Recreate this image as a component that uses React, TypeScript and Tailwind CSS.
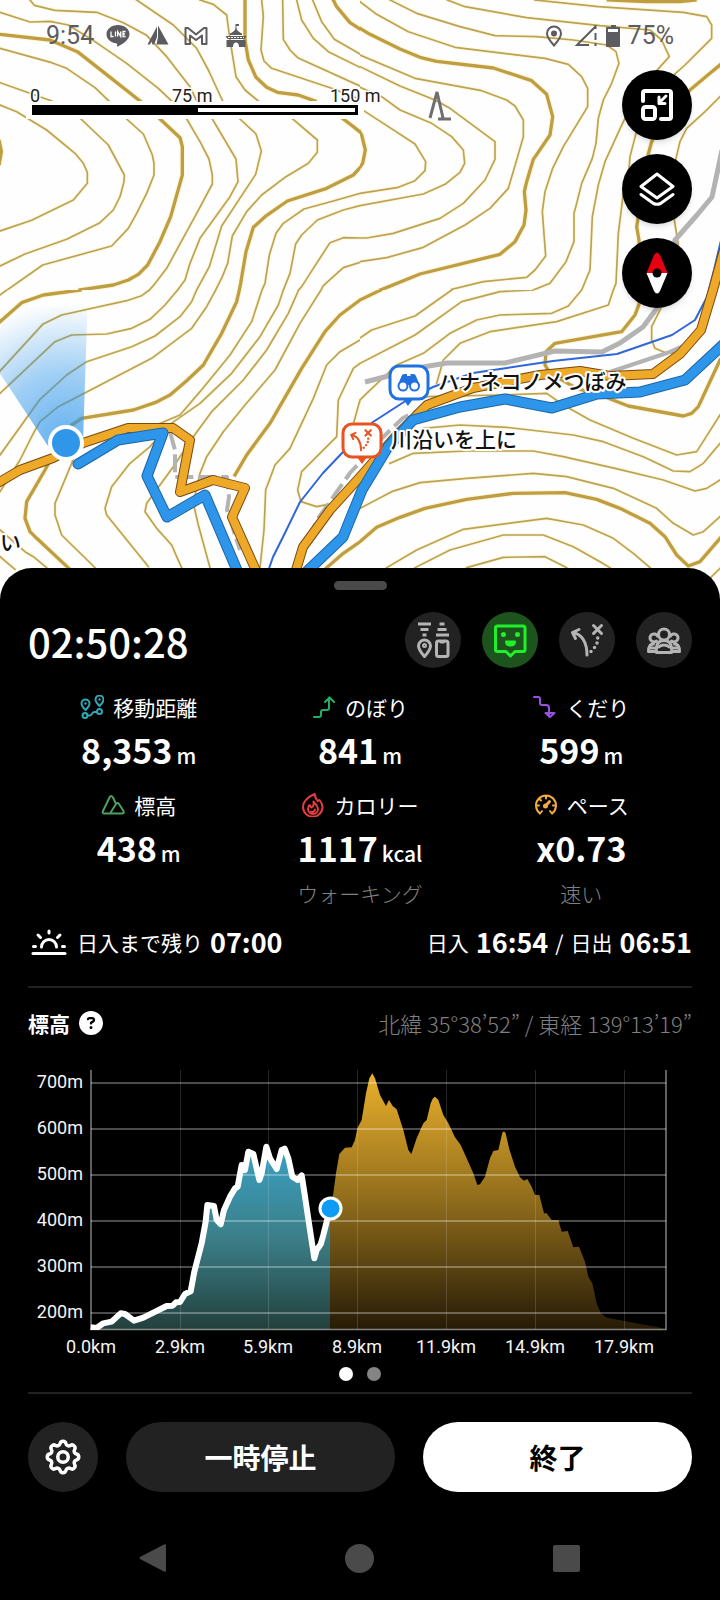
import type { ReactNode } from "react";
import { FaCircleQuestion } from "react-icons/fa6";
import { TbSettings } from "react-icons/tb";

type Tile = { x: number; y: number; width: number; height: number; viewBox: string; minor: string[]; major: string[] };

// contour tiles, drawn at 3 units per map pixel
const tiles: Tile[] = [
  {
    x: 0, y: 0, width: 360, height: 290, viewBox: "0 0 1080 870",
    minor: [
      "0,37 90,66 150,64 205,75 285,125 380,190 475,265 515,303",
      "90,0 103,16 165,31 290,37 370,68 440,106 500,170 570,260 590,303",
      "410,0 520,75 590,145 625,210 668,303",
      "600,0 640,13 680,45 690,120 708,230 735,270 775,303",
      "785,0 790,50 783,150 792,183 815,205 995,265 1080,298",
      "848,0 850,118 870,150 893,173 1080,258",
      "890,0 905,60 940,115 985,155 1080,202",
      "938,0 965,65 1003,118 1080,162",
      "0,145 155,188 200,205 285,263 327,303",
      "0,248 90,280 155,303",
      "0,315 50,335 140,390 225,460 250,490 262,517 262,550 220,600 95,661 0,693",
      "243,357 325,435 373,525 372,545 360,590 340,630 300,668 200,718 75,762 0,798",
      "380,357 430,402 457,465 462,490 462,525 440,580 410,640 385,685 335,738 128,795 0,885",
      "560,357 600,425 627,477 637,525 637,552 590,640 500,805 460,857 448,870",
      "637,357 708,477 714,545 690,590 600,715 570,790 555,840 533,870",
      "720,357 768,402 784,453 767,523 665,678 628,800 590,870",
      "878,357 952,420 952,457 925,490 858,530 785,585 740,635 697,708 683,790 667,830 647,870",
      "1080,580 1000,603 912,627 850,670 828,700 808,765 795,850 786,870",
      "1080,617 1030,630 952,660 905,705 887,732 870,820 850,870",
      "1080,714 1030,713 990,728 940,805 905,860 896,870",
      "1080,787 1030,803 970,857 963,870",
    ],
    major: [
      "735,0 735,120 745,180 768,232 800,262 832,277 895,285 945,303",
      "1000,0 1010,20 1050,68 1080,87",
      "0,103 150,120 232,155 300,208 420,303",
      "480,357 540,413 547,440 547,525 512,650 480,725 443,795 415,823 385,840 340,855 240,870",
      "1030,357 1060,380 1085,400",
      "1085,498 1060,525 980,565 862,603 795,650 760,682 738,755 722,850 718,870",
      "-2,425 4,455 -2,490",
    ],
  },
  {
    x: 360, y: 0, width: 360, height: 290, viewBox: "0 0 1080 870",
    minor: [
      "0,5 50,43 145,95 285,142 555,175 625,193 665,230 683,265 683,320 610,440 578,505 555,575 547,635 557,768 525,810 500,832 370,845 275,868",
      "90,0 170,40 300,80 405,107 530,110 640,120 740,135 768,155 777,190 755,250 730,300 715,355 708,430 697,475 665,550 650,610 642,640 642,725 618,785 570,850 520,870",
      "262,0 315,20 500,53 720,77 870,90 905,120 928,170 860,245 790,365 760,430 735,485 715,555 697,650 690,810 665,870",
      "525,0 715,20 970,37 1040,50 1055,75 1055,115 975,195 930,235 880,330 828,400 810,470 805,530 790,580 775,700 768,850 760,870",
      "1080,290 1035,335 980,385 960,425 948,475 935,560 943,660 955,735 950,800 915,870",
      "0,165 165,235 365,272 440,300 465,318 490,360 490,410 470,480 445,565 390,625 315,675 190,742 80,773 0,785",
      "0,200 120,258 225,300 270,325 405,425 405,478 375,540 310,610 240,655 100,700 20,714 0,714",
      "0,262 65,290 120,330 215,370 275,410 310,450 314,490 300,517 255,553 190,582 0,617",
      "5,328 70,370 165,432 197,485 195,512 165,542 115,562 0,580",
    ],
    major: [
      "745,0 860,5 960,5 1005,0",
      "1080,195 1040,228 990,270 920,340 875,425 860,480 850,560 830,680 837,720 840,870",
      "0,85 30,103 120,147 180,172 230,184 400,204 515,242 560,283 578,350 570,405 520,478 500,545 493,575 498,630 492,675 465,725 420,763 180,822 62,870",
      "-5,388 5,405 16,450 8,490 -5,508",
    ],
  },
  {
    x: 0, y: 290, width: 360, height: 320, viewBox: "0 0 1080 960",
    minor: [
      "0,15 20,0",
      "448,0 425,17 380,32 185,75 128,103 0,243",
      "533,0 495,45 450,88 395,115 320,132 215,135 165,155 0,310",
      "590,0 575,35 540,80 465,138 395,170 260,215 200,255 120,328 0,495",
      "647,0 620,50 575,115 455,205 175,350 120,395 100,430 60,510 0,605",
      "786,0 755,95 690,195 600,305 540,375 480,400",
      "850,0 835,45 780,140 695,250 600,340 500,410 450,470 390,520 335,590 315,655 320,675 445,830",
      "240,450 215,520 165,640 165,675 185,735 285,833",
      "896,0 865,70 800,180 730,270 635,365 580,440 520,530 440,640 435,665 470,715 515,765 530,800 545,833",
      "963,0 900,100 825,240 735,345 670,425 620,500 600,550 580,640 595,705 630,833",
      "1080,150 1020,185 980,225 940,325 870,475 825,525 797,600 792,720 780,833",
      "1080,220 1060,235 1015,330 1010,440 905,545 893,600 903,635 950,650 1000,640 1080,560",
      "1080,330 1062,395",
      "0,720 75,785 100,800 140,833 160,860",
      "0,800 45,838",
    ],
    major: [
      "0,95 65,38 130,15 240,0",
      "718,0 710,35 665,130 610,225 560,272 510,315 465,338 400,360 245,385 215,405 170,475 135,540 80,635 75,685 90,725 110,745 215,843",
      "1080,30 1020,75 975,125 905,235 810,400 740,495 705,555",
      "980,833 1030,790 1080,755",
    ],
  },
  {
    x: 360, y: 290, width: 360, height: 320, viewBox: "180 0 1080 960",
    minor: [
      "455,0 345,78 215,120 120,185",
      "700,0 600,5 485,35 345,135 180,220",
      "845,0 805,48 755,70 600,75 530,90 450,130 370,190 290,225 200,310 180,330 165,395",
      "940,0 925,45 770,95 570,125 480,160 430,210 410,280",
      "1095,0 1085,50 1055,110 1055,150 1065,175 1100,190 1150,185",
      "380,320 600,315 740,310 790,345 870,390 1000,445 1130,495 1190,485 1225,430 1260,375",
      "370,415 480,405 620,412 820,435 910,455 1030,500 1120,543 1170,545 1210,520 1260,460",
      "270,520 340,490 500,483 700,483 790,500 945,535 1090,570 1185,603 1220,595 1260,570",
      "180,655 275,605 360,578 500,565 700,550 800,560 940,595 1070,655 1120,700 1180,735 1210,725 1260,680",
      "260,833 350,780 490,718 740,685 850,705 940,745 1000,790 1050,833",
      "345,833 450,780 610,735 730,735 820,770 900,815 930,833",
      "500,833 610,802 735,800 800,833",
      "1235,860 1260,835",
    ],
    major: [
      "180,30 242,0",
      "180,755 230,712 300,682 375,655 500,628 640,610 795,608 890,628 960,655 1050,700 1095,740 1130,795 1165,828 1200,815 1260,745",
      "1020,0 1018,40 1005,75 965,125 765,160 738,185 735,225 750,250 830,295 900,315 985,348 1150,378 1175,370 1195,350 1260,210",
    ],
  },
];

const plannedRoutes = [
  "-4,484 20,470 53,458 83,443 128,428 173,428 190,440 180,492 213,480 245,488 232,517 262,584",
  "293,580 303,547 330,510 360,477 395,437 427,405 473,388 540,375 580,371 610,376 653,374 680,354 701,330 713,290 724,250",
];
const walkedRoutes = [
  "78,464 118,440 163,433 147,476 167,517 205,495 242,582",
  "298,580 343,537 362,490 388,447 413,420 460,407 505,399 552,408 597,394 640,392 685,380 726,342",
];

function SignPost({ color }: { color: string }) {
  return (
    <g fill="none" stroke={color} strokeWidth="3" strokeLinecap="round" strokeLinejoin="round">
      <path d="M20 17.500 13.500 20.500 16.500 26.500M14.500 21c8 1 13.500 9 13.500 22" />
      <path d="m34.500 13.500 8 8m0-8-8 8" />
      <path d="M38.700 26v0M38 31v0M35.500 35.500v0M32 39.500v0" strokeWidth="3.500" />
    </g>
  );
}

function ContourMap() {
  return (
    <svg viewBox="0 0 720 600" preserveAspectRatio="xMidYMin slice" className="h-full w-full" role="img" aria-label="地図">
      <defs>
        <radialGradient id="beam" gradientUnits="userSpaceOnUse" cx="66" cy="443" r="140">
          <stop offset="0" stopColor="#2f96ea" stopOpacity="0.75" />
          <stop offset="0.5" stopColor="#2f96ea" stopOpacity="0.45" />
          <stop offset="1" stopColor="#2f96ea" stopOpacity="0" />
        </radialGradient>
      </defs>
      <rect width="720" height="600" fill="#fefefe" />
      {tiles.map((t) => (
        <svg key={`${t.x}-${t.y}`} x={t.x} y={t.y} width={t.width} height={t.height} viewBox={t.viewBox} fill="none" stroke="#fdf7dc" strokeWidth="11" strokeLinejoin="round" strokeLinecap="square">
          {t.minor.map((p) => <polyline key={p} points={p} />)}
          {t.major.map((p) => <polyline key={p} points={p} strokeWidth="17" />)}
        </svg>
      ))}
      {tiles.map((t) => (
        <svg key={`${t.x}-${t.y}`} x={t.x} y={t.y} width={t.width} height={t.height} viewBox={t.viewBox} fill="none" strokeLinejoin="round" strokeLinecap="square">
          <g stroke="#bba254" strokeWidth="5">
            {t.minor.map((p) => <polyline key={p} points={p} />)}
          </g>
          <g stroke="#bf9d42" strokeWidth="10">
            {t.major.map((p) => <polyline key={p} points={p} />)}
          </g>
        </svg>
      ))}

      {/* roads, footpaths and the stream */}
      <g fill="none" strokeLinejoin="round">
        <g stroke="#b3b3b3" strokeWidth="5">
          <polyline points="365,382 423,367 447,363 505,363 555,351 602,352 620,343 643,327 663,300 670,270 675,240 697,215 712,197 722,150" />
          <polyline points="610,372 667,353 690,343" strokeWidth="4" />
          <polyline points="430,405 403,418 380,440 350,473 317,520 300,560" strokeWidth="4" strokeDasharray="18 6" />
          <polyline points="170,432 175,450 175,477 192,477 227,477 229,497 227,510 240,550" strokeWidth="4" strokeDasharray="18 5" />
        </g>
        <polyline points="265,580 273,557 283,537 300,502 323,473 343,452 373,422 407,400 433,387 473,373 507,368 553,361 617,354 672,335 695,320 707,297 714,270 722,236" stroke="#2f66d8" strokeWidth="2" />
      </g>

      <g fill="none" strokeLinejoin="round" strokeLinecap="round">
        {plannedRoutes.map((p) => <polyline key={p} points={p} stroke="#774a12" strokeWidth="10" />)}
        {plannedRoutes.map((p) => <polyline key={p} points={p} stroke="#efa928" strokeWidth="8" />)}
        {walkedRoutes.map((p) => <polyline key={p} points={p} stroke="#1d66a8" strokeWidth="11" />)}
        {walkedRoutes.map((p) => <polyline key={p} points={p} stroke="#2d96ea" strokeWidth="9" />)}
      </g>

      <path d="M48 446-30 328V290H88L83 443Z" fill="url(#beam)" />
      <circle cx="66" cy="443" r="18" fill="#fff" />
      <circle cx="66" cy="443" r="14" fill="#2f96ea" />

      <path d="m403 399 5 7 5-7Z" fill="#2070de" />
      <rect x="390" y="366" width="38" height="33" rx="9" fill="#fff" stroke="#2070de" strokeWidth="3" />
      <path d="M398 385 401.500 376q.5-2 3-2h2.500v2h3.500v-2h2.500q2.500 0 3 2L419.500 385Z" fill="#2070de" />
      <g fill="#fff" stroke="#2070de" strokeWidth="2">
        <circle cx="403" cy="386" r="4.500" />
        <circle cx="414.500" cy="386" r="4.500" />
      </g>
      <path d="m357 457 5 7 5-7Z" fill="#e8531f" />
      <rect x="343" y="424" width="38" height="33" rx="9" fill="#fff" stroke="#e8531f" strokeWidth="3" />
      <svg x="342" y="421" width="38" height="38" viewBox="0 0 56 56"><SignPost color="#e8531f" /></svg>

      <g fill="#111" stroke="#fff" strokeWidth="4" strokeLinejoin="round" className="text-[21px] font-medium [paint-order:stroke]">
        <text x="438" y="389">ハナネコノメつぼみ</text>
        <text x="391" y="447">川沿いを上に</text>
        <text x="0" y="550">い</text>
      </g>

      {/* scale bar */}
      <rect x="26" y="101" width="338" height="18" fill="#fefefe" />
      <rect x="32" y="105" width="326" height="10" fill="#000" />
      <rect x="198" y="108" width="157" height="4" fill="#fff" />
      <g fill="#222" stroke="#fff" strokeWidth="3" className="font-[Roboto] text-[18px] [paint-order:stroke]">
        <text x="30" y="102">0</text>
        <text x="172" y="102">75 m</text>
        <text x="330" y="102">150 m</text>
      </g>
      <path d="m430 118 7-26 6 26m-5 1h13" fill="none" stroke="#6f6f6f" strokeWidth="3" />
    </svg>
  );
}

function StatusBar() {
  return (
    <div className="absolute inset-x-0 top-0 flex h-[72px] items-center justify-between pr-[46px] pl-[46px] font-[Roboto] text-[25px] text-[#5c5c60]">
      <div className="flex items-center gap-3">
        <span>9:54</span>
        <svg viewBox="0 0 24 24" className="size-6" aria-hidden="true">
          <path d="M12 1C5.500 1 .5 5 .5 10.200c0 4.600 4 8.400 9.700 9.100 1.500.3.800 1.700.8 3.400 4-1.500 12.500-6.500 12.500-12.500C23.500 5 18.500 1 12 1Z" fill="currentColor" />
          <path d="M5 7.500v5h2.500M9.500 7.500v5M11.700 12.500v-5l3 5v-5M19.500 7.500H17v5h2.500M17 10h2" fill="none" stroke="#fff" strokeWidth="1.300" />
        </svg>
        <svg viewBox="0 0 24 24" className="ml-1 size-6" aria-hidden="true">
          <path d="M12 1.500 22.500 20.500H10.500L12 13ZM11 2.500V13L8 20.500H6.500L5.500 17.500 4 20.500H1.500Z" fill="currentColor" />
        </svg>
        <svg viewBox="0 0 24 24" className="ml-[2px] size-6" aria-hidden="true">
          <path d="M1.500 20V4H4l8 6.500L20 4h2.500v16H18v-8.500L12 16l-6-4.500V20Z" fill="none" stroke="currentColor" strokeWidth="2" strokeLinejoin="round" />
        </svg>
        <svg viewBox="0 0 24 24" className="ml-1 size-6" aria-hidden="true">
          <path d="M12 0v6" stroke="currentColor" strokeWidth="1" />
          <path d="M12 0h3v2h-3ZM12 4c1 3 4 4.500 6 5.500V11H6V9.500C8 8.500 11 7 12 4ZM1.500 12h21l-2 3h-17ZM2.500 16h19v7H15c0-3-1-4.500-3-4.500S9 20 9 23H2.500Z" fill="currentColor" />
          <path d="M4 13.500h16" stroke="#fff" strokeWidth="1" strokeDasharray="2 1" />
        </svg>
      </div>
      <div className="flex items-center gap-2">
        <svg viewBox="0 0 24 24" className="size-6" aria-hidden="true">
          <path d="M12 21.500C8 17 5 13.500 5 9.500a7 7 0 0 1 14 0c0 4-3 7.500-7 12Z" fill="none" stroke="currentColor" strokeWidth="2" />
          <circle cx="12" cy="9.500" r="3" fill="currentColor" />
        </svg>
        <svg viewBox="0 0 24 24" className="size-6" aria-hidden="true">
          <path d="M21 3 3 21h12M21.500 1v4" fill="none" stroke="currentColor" strokeWidth="2" />
          <path d="M21.500 9v7m0 3v3" stroke="currentColor" strokeWidth="2" />
        </svg>
        <svg viewBox="0 0 14 24" className="h-6 w-[14px]" aria-hidden="true">
          <path d="M5 1h5v2h3q1 0 1 1v18q0 1-1 1H1q-1 0-1-1V4q0-1 1-1h4ZM2 5v3h10V5Z" fill="currentColor" fillRule="evenodd" />
        </svg>
        <span>75%</span>
      </div>
    </div>
  );
}

function MapButton({ label, children }: { label: string; children: ReactNode }) {
  return (
    <button type="button" aria-label={label} className="grid size-[70px] place-items-center rounded-full bg-black shadow-md">
      {children}
    </button>
  );
}

function MapControls() {
  return (
    <div className="absolute top-[70px] right-7 flex flex-col gap-[14px]">
      <MapButton label="地図を縮小">
        <svg viewBox="0 0 36 36" className="size-9" fill="none" stroke="#fff" strokeWidth="4" strokeLinecap="round" strokeLinejoin="round">
          <path d="M4 14V6q0-2 2-2h24q2 0 2 2v24q0 2-2 2H22" />
          <rect x="4" y="20" width="12" height="12" rx="2.500" />
          <path d="M27 9 20 16m0-6v6.500h6" strokeWidth="3" />
        </svg>
      </MapButton>
      <MapButton label="レイヤー">
        <svg viewBox="0 0 36 36" className="size-9" fill="none" stroke="#fff" strokeWidth="3" strokeLinecap="round" strokeLinejoin="round">
          <path d="M18 3 34 15.500 18 27 2 15.500Z" />
          <path d="M2 23.500 14.500 32.500q3.500 1.500 7 0L34 23.500" />
        </svg>
      </MapButton>
      <MapButton label="方位">
        <svg viewBox="0 0 30 48" className="h-12 w-[30px]">
          <path d="M4.500 24 12 6q3-5 6 0l7.500 18Z" fill="#e60012" />
          <path d="M4.500 24 12 42q3 5 6 0l7.500-18Z" fill="#fff" />
          <circle cx="15" cy="24" r="4.500" />
        </svg>
      </MapButton>
    </div>
  );
}

function RoundButton({ label, active, children }: { label: string; active?: boolean; children: ReactNode }) {
  return (
    <button
      type="button"
      aria-label={label}
      className={active ? "size-14 rounded-full bg-[#1d541d] text-[#1ff02a]" : "size-14 rounded-full bg-[#222] text-[#b4b4b4]"}
    >
      <svg viewBox="0 0 56 56" className="size-14" fill="none" stroke="currentColor" strokeWidth="3" strokeLinecap="round" strokeLinejoin="round">
        {children}
      </svg>
    </button>
  );
}

function QuickActions() {
  return (
    <div className="flex gap-[21px]">
      <RoundButton label="装備">
        <path d="M13 12h13M15.500 17.500h8M17.500 23h4M34.500 12h5M32.500 17.500h9M31 23h13" strokeLinecap="butt" />
        <path d="M19.500 44.500c-3.500-4-6-7-6-10.500a6 6 0 0 1 12 0c0 3.500-2.500 6.500-6 10.500Z" />
        <circle cx="19.500" cy="33.500" r="1" />
        <rect x="31.500" y="29" width="11.500" height="15.500" rx="2" />
        <path d="M36 30h2.500" />
      </RoundButton>
      <RoundButton label="フィールドメモ" active>
        <path d="M15.500 14h25.500q2 0 2 2v21.500q0 2-2 2h-8L28.500 44l-4.500-4.500h-8.500q-2 0-2-2V16q0-2 2-2Z" />
        <path d="M21.500 22.500h0M35.500 22.500h0" strokeWidth="5" />
        <path d="M24 29.500h9q0 4-4.500 4t-4.500-4Z" fill="currentColor" strokeWidth="2" />
      </RoundButton>
      <RoundButton label="ルート">
        <SignPost color="currentColor" />
      </RoundButton>
      <RoundButton label="メンバー">
        <circle cx="28" cy="22.500" r="5.500" />
        <path d="M20.500 40.500c-1-8 2-12 7.500-12s8.500 4 7.500 12Z" />
        <path d="M22.500 35q5.500-4 11 0" />
        <path d="M20.500 29a4 4 0 1 1 1-5M35.500 29a4 4 0 1 0-1-5" />
        <path d="M19.500 39.500h-7c0-5 1.500-7.500 5-7.500M36.500 39.500h7c0-5-1.500-7.500-5-7.500" />
        <path d="M15 36h3M41 36h-3" />
      </RoundButton>
    </div>
  );
}

type Stat = { label: string; value: string; unit?: string; note?: string; color: string; icon: ReactNode };

const stats: Stat[] = [
  {
    label: "移動距離", value: "8,353", unit: "m", color: "text-[#2fa9b8]",
    icon: (
      <>
        <path d="M5.500 15C3 12.500 1.500 10.500 1.500 8.500a4 4 0 0 1 8 0c0 2-1.500 4-4 6.500ZM19.500 11C17 8.500 15.500 6.500 15.500 4.500a4 4 0 0 1 8 0c0 2-1.500 4-4 6.500Z" />
        <path d="M5.500 8.500h0M19.500 4.500h0" strokeWidth="2.500" />
        <circle cx="5" cy="20.500" r="2.500" />
        <circle cx="19.500" cy="16.500" r="2.500" />
        <path d="M7.500 20.500h2c3 0 2-3.500 5-3.500h2.500" />
      </>
    ),
  },
  { label: "のぼり", value: "841", unit: "m", color: "text-[#27ae60]", icon: <path d="M2 22h5q2 0 2-2v-3q0-2 2-2h4q2 0 2-2V2.500M13 7l4.500-4.500L22 7" /> },
  { label: "くだり", value: "599", unit: "m", color: "text-[#9b51e0]", icon: <path d="M1 2h4q2 0 2 2v4q0 2 2 2h4q3 0 3 3v8.500M12.500 18l4.500 4 4.500-4Z" /> },
  { label: "標高", value: "438", unit: "m", color: "text-[#4f9f5c]", icon: <path d="M3 20.500q-2-.5-1-2.500L8.500 4.500q1.500-3 3.500 0l3 6.500M3 20.500h18q2.500 0 1.500-2.500L18 11q-1.500-2-3 0l-6 9.500" /> },
  {
    label: "カロリー", value: "1117", unit: "kcal", note: "ウォーキング", color: "text-[#e63c3c]",
    icon: (
      <>
        <path d="M13.500 1C6 4.500 2 8.500 2 14a9.500 9.500 0 0 0 19.500 0c0-3-1.500-5-3-7-1 1-1.500 1-2 1-1.500-2-2.500-4-3-7Z" />
        <path d="M12.500 8.500c2 3 4.500 4 4.500 7.500a5 5 0 0 1-10 0c0-1.500.5-3 1.500-4 1 1 1 2 2 2.500 2-1 2.500-3 2-6ZM10 18.500c1.500 1 3.500.5 4-2" />
      </>
    ),
  },
  {
    label: "ペース", value: "x0.73", note: "速い", color: "text-[#f0ac3c]",
    icon: (
      <>
        <path d="M6 20.500a10 10 0 1 1 12 0" />
        <path d="M6 20.500l2-2.500M18 20.500 16 18M2.500 12.500H5M21.500 12.500H19M12 3v2.500M5.500 6l1.500 1.500" />
        <path d="M11.500 13 15.500 8.500" strokeWidth="3" />
        <circle cx="11.500" cy="13" r="1.500" />
      </>
    ),
  },
];

function StatCell({ label, value, unit, note, color, icon }: Stat) {
  return (
    <div className="flex flex-col items-center">
      <dt className="flex h-[30px] items-center gap-[9px] text-[21px] leading-[30px]">
        <svg viewBox="0 0 24 24" className={`size-6 ${color}`} fill="none" stroke="currentColor" strokeWidth="2" strokeLinecap="round" strokeLinejoin="round" aria-hidden="true">
          {icon}
        </svg>
        {label}
      </dt>
      <dd className="mt-1 flex h-11 items-baseline gap-1 text-[34px] leading-[48px] font-bold">
        {value}
        {unit ? <span className="text-[21px] leading-none font-medium">{unit}</span> : null}
      </dd>
      {note ? <dd className="mt-[10px] mb-[2px] text-[21px] leading-[30px] font-light text-[#808080]">{note}</dd> : null}
    </div>
  );
}

// profile samples, 3 units per chart pixel
const walked =
  "272,832 290,834 310,820 335,815 362,790 375,792 402,812 430,803 500,768 518,767 528,757 540,756 555,732 572,724 583,665 605,580 617,515 622,465 642,468 650,510 662,523 672,480 690,440 705,415 713,410 725,345 735,360 745,305 760,312 778,390 785,370 799,290 810,325 830,357 845,300 854,296 865,325 877,380 893,390 905,376 912,420 930,540 943,625 950,600 962,583 970,555 980,515 992,476";
const planned =
  "990,478 1000,430 1008,370 1018,312 1035,293 1055,292 1065,270 1072,235 1085,210 1098,130 1108,85 1117,70 1125,85 1140,135 1158,168 1167,150 1178,168 1190,178 1210,240 1225,300 1234,312 1250,265 1270,220 1280,210 1292,160 1299,145 1305,140 1315,150 1330,195 1345,220 1365,262 1382,285 1400,325 1420,370 1432,405 1440,403 1455,380 1470,325 1480,303 1495,300 1507,248 1512,244 1517,250 1528,298 1545,350 1560,382 1572,392 1582,387 1595,410 1605,435 1618,435 1632,490 1640,490 1655,510 1675,510 1685,545 1703,543 1720,592 1737,590 1755,635 1765,680 1777,700 1790,760 1802,790 1820,803 1870,812 1920,822 1970,830 1998,838";

const elevations = [
  { label: "700m", y: 17 },
  { label: "600m", y: 63 },
  { label: "500m", y: 109 },
  { label: "400m", y: 155 },
  { label: "300m", y: 201 },
  { label: "200m", y: 247 },
];
const distances = [
  { label: "0.0km", x: 63 },
  { label: "2.9km", x: 152 },
  { label: "5.9km", x: 240 },
  { label: "8.9km", x: 329 },
  { label: "11.9km", x: 418 },
  { label: "14.9km", x: 507 },
  { label: "17.9km", x: 596 },
];

function ElevationChart() {
  return (
    <svg viewBox="0 0 664 294" className="mt-7 w-full" role="img" aria-label="標高グラフ">
      <defs>
        <linearGradient id="walkedFill" x1="0" y1="0" x2="0" y2="1">
          <stop offset="0" stopColor="#3aa0c4" />
          <stop offset="0.500" stopColor="#3b7f88" />
          <stop offset="1" stopColor="#233f3c" />
        </linearGradient>
        <linearGradient id="plannedFill" x1="0" y1="0" x2="0" y2="1">
          <stop offset="0" stopColor="#eab02c" />
          <stop offset="0.500" stopColor="#8f6c1c" />
          <stop offset="1" stopColor="#261b07" />
        </linearGradient>
        <clipPath id="plot"><rect x="270" width="1740" height="840" /></clipPath>
      </defs>
      <g transform="translate(-28 -16) scale(0.33333)">
        <polygon points={`272,838 ${walked} 990,838`} fill="url(#walkedFill)" />
        <polygon points={`990,838 ${planned}`} fill="url(#plannedFill)" />
      </g>
      <g stroke="#fff" strokeWidth="1">
        {elevations.map((e) => <path key={e.label} d={`M63 ${e.y}H638`} strokeOpacity="0.400" strokeWidth="1.500" />)}
        {distances.slice(1).map((d) => <path key={d.label} d={`M${d.x}.5 4V263`} strokeOpacity="0.150" />)}
        <path d="M63 4V263.500H638V4" fill="none" strokeOpacity="0.500" strokeWidth="1.500" />
      </g>
      <g transform="translate(-28 -16) scale(0.33333)" clipPath="url(#plot)">
        <polyline points={walked} fill="none" stroke="#fff" strokeWidth="18" strokeLinejoin="round" />
      </g>
      <circle cx="302.500" cy="142.500" r="12" fill="#fff" />
      <circle cx="302.500" cy="142.500" r="9" fill="#0d9bf5" />
      <g fill="#f5f5f5" className="font-[Roboto] text-[18px]">
        {elevations.map((e) => <text key={e.label} x="55" y={e.y + 5} textAnchor="end">{e.label}</text>)}
        {distances.map((d) => <text key={d.label} x={d.x} y="287" textAnchor="middle">{d.label}</text>)}
      </g>
    </svg>
  );
}

function SunTimes() {
  return (
    <div className="mt-3 flex h-10 items-center justify-between text-[21px] leading-10">
      <div className="flex items-center">
        <svg viewBox="0 0 36 28" className="mr-[10px] ml-[3px] h-7 w-9" fill="none" stroke="#fff" strokeWidth="3" strokeLinecap="round" aria-hidden="true">
          <path d="M2 25.500h32" />
          <path d="M10.500 19a7.500 7.500 0 0 1 15 0M18 3v2M7 7l2.500 2.500M29 7l-2.500 2.500M2.500 18.500h2M31.500 18.500h2" />
        </svg>
        <span>日入まで残り</span>
        <b className="ml-[7px] text-[27px]">07:00</b>
      </div>
      <div className="flex items-center gap-[7px]">
        <span>日入</span>
        <b className="text-[27px]">16:54</b>
        <span>/</span>
        <span>日出</span>
        <b className="text-[27px]">06:51</b>
      </div>
    </div>
  );
}

export default function App() {
  return (
    <div lang="ja" className="min-h-screen bg-black font-['Noto_Sans_CJK_JP',sans-serif] text-white">
      <header className="relative h-[600px]">
        <ContourMap />
        <StatusBar />
        <MapControls />
      </header>

      <main className="relative -mt-8 rounded-t-[32px] bg-black px-7 pt-[13px]">
        <div className="mx-auto h-[9px] w-[53px] rounded-full bg-[#4a4a4a]" />
        <div className="mt-[22px] flex h-14 items-center justify-between">
          <h1 className="pt-[2px] text-[40px] leading-[58px] font-medium">02:50:28</h1>
          <QuickActions />
        </div>

        <dl className="mt-6 grid grid-cols-3 gap-y-5">
          {stats.map((s) => <StatCell key={s.label} {...s} />)}
        </dl>

        <SunTimes />

        <section className="mt-6 border-y-2 border-[#222] pb-[11px]">
          <div className="mt-5 flex h-[30px] items-center justify-between leading-[30px]">
            <h2 className="flex items-center gap-[9px] text-[21px] font-bold">
              標高
              <button type="button" aria-label="標高について"><FaCircleQuestion className="size-6" /></button>
            </h2>
            <p className="text-[22px] font-light text-[#808080]">北緯 35°38’52” / 東経 139°13’19”</p>
          </div>
          <ElevationChart />
          <div className="mt-[7px] flex justify-center gap-[14px]">
            <span className="size-[14px] rounded-full bg-white" />
            <span className="size-[14px] rounded-full bg-[#848484]" />
          </div>
        </section>

        <div className="mt-7 flex gap-7">
          <button type="button" aria-label="設定" className="grid size-[70px] shrink-0 place-items-center rounded-full bg-[#222]">
            <TbSettings className="size-[42px]" />
          </button>
          <button type="button" className="h-[70px] flex-1 rounded-full bg-[#222] text-[28px] font-bold">一時停止</button>
          <button type="button" className="h-[70px] flex-1 rounded-full bg-white text-[28px] font-bold text-black">終了</button>
        </div>
      </main>

      <nav className="mt-[34px] grid h-16 grid-cols-3 place-items-center px-[50px] text-[#4a4a4a]">
        <button type="button" aria-label="戻る">
          <svg viewBox="0 0 30 30" className="size-[30px]" fill="currentColor"><path d="M26 1.500q2-1 2 1v25q0 2-2 1L2 16q-1-1 0-2Z" /></svg>
        </button>
        <button type="button" aria-label="ホーム" className="size-[29px] rounded-full bg-[#4a4a4a]" />
        <button type="button" aria-label="履歴" className="size-[27px] rounded-xs bg-[#4a4a4a]" />
      </nav>
    </div>
  );
}
